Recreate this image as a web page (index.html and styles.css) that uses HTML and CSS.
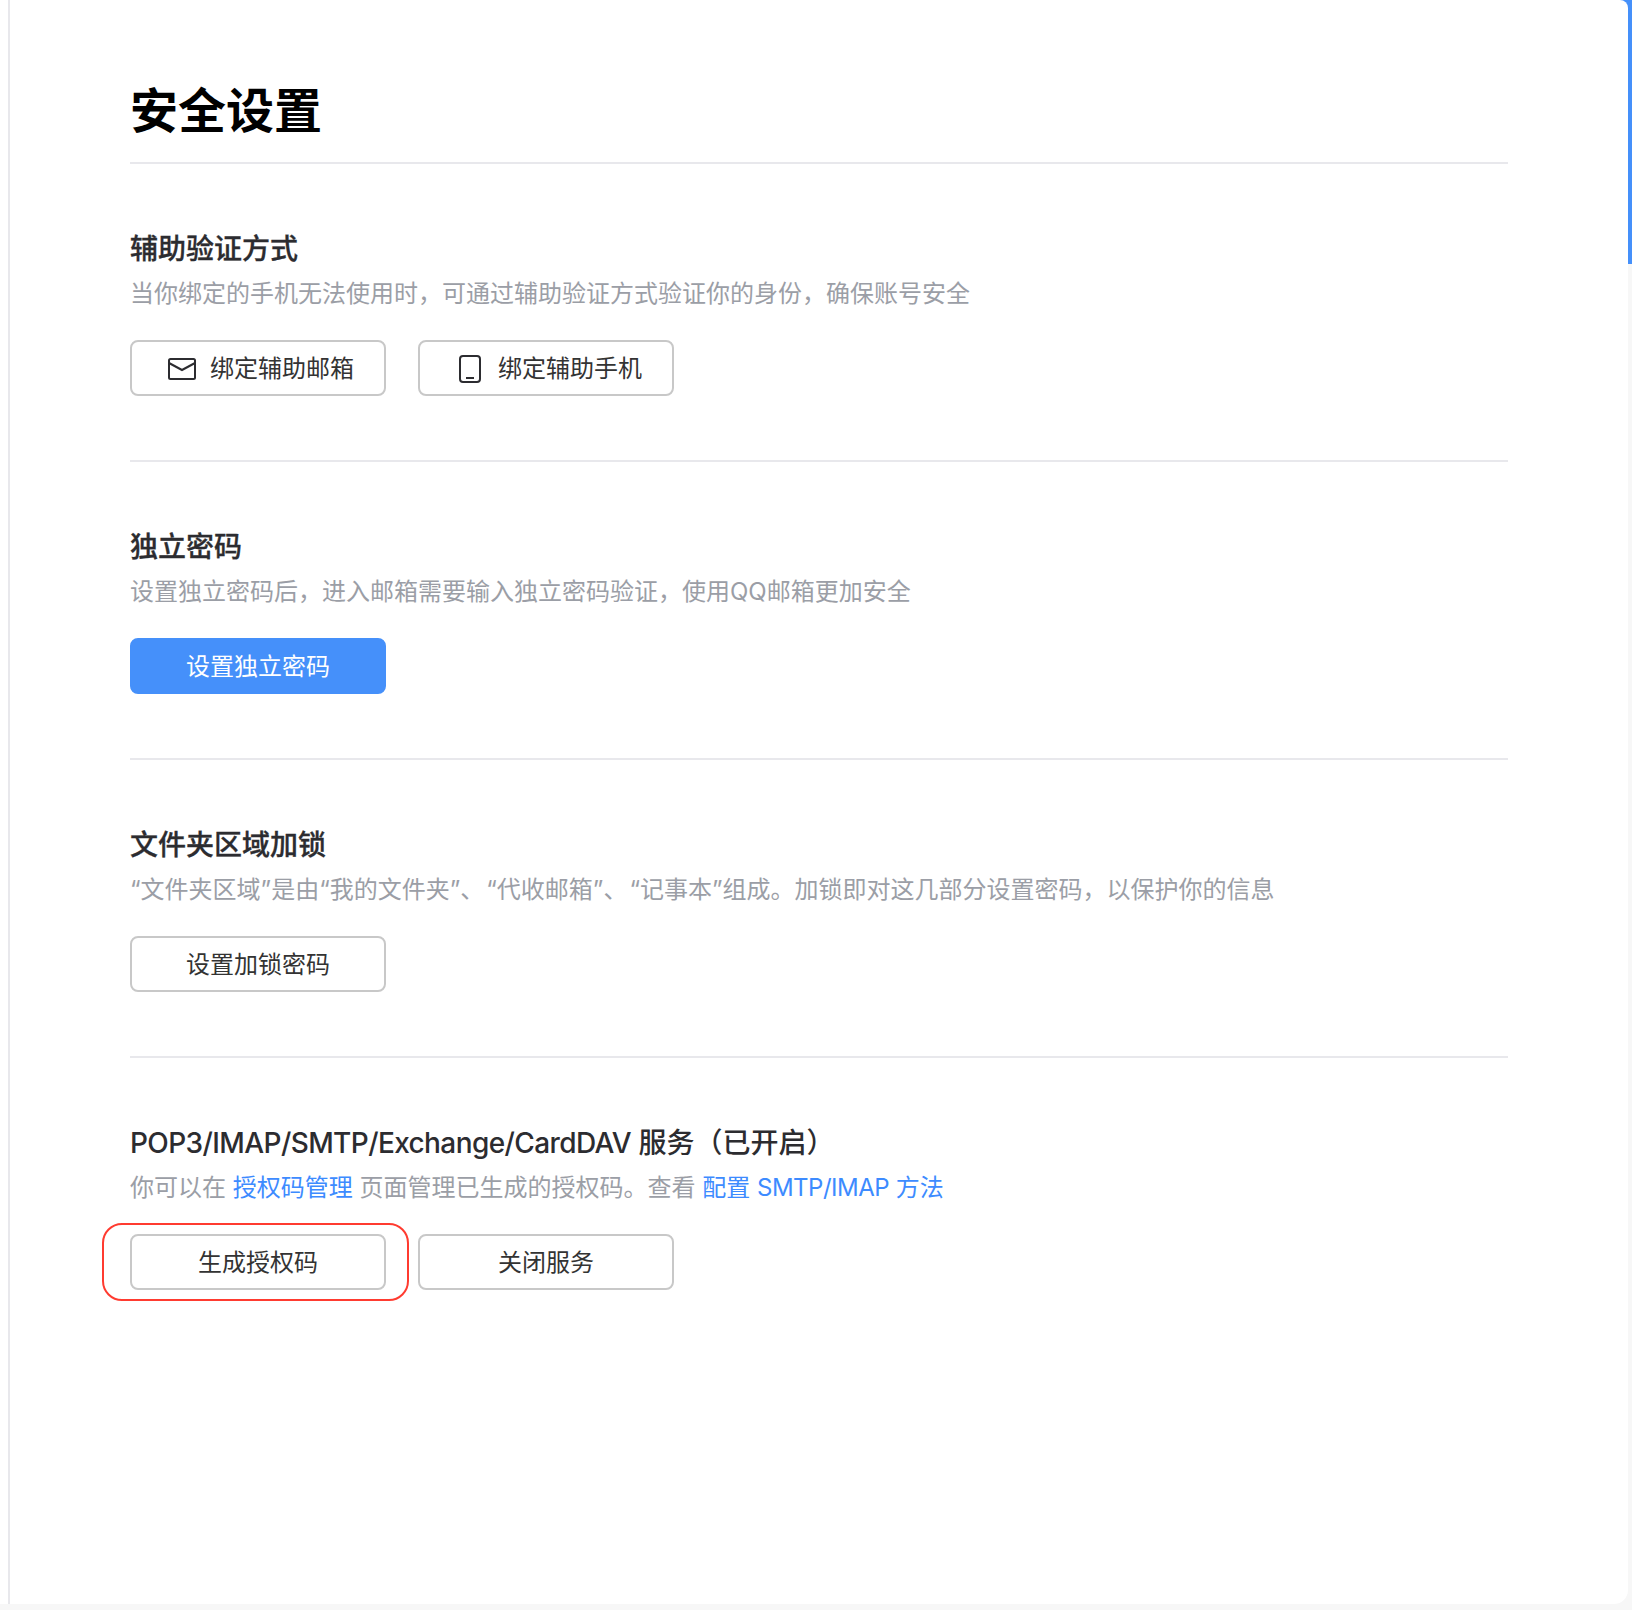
FILE: index.html
```html
<!doctype html>
<html lang="zh-CN">

<head>
    <meta charset="UTF-8" />
    <title>安全设置</title>
    <link rel="stylesheet" href="styles.css">
</head>

<body>
    <div class="scrollbar"></div>
    <div class="page">
        <div class="panel">
            <h1 class="page-title">安全设置</h1>

            <section class="section">
                <h2 class="section-title title-strong">辅助验证方式</h2>
                <p class="section-desc">当你绑定的手机无法使用时，可通过辅助验证方式验证你的身份，确保账号安全</p>
                <div class="button-group">
                    <button class="btn btn-mail">
                        <svg class="btn-icon" width="28" height="22" viewBox="0 0 28 22" fill="none" stroke="#2c2c30" stroke-width="2">
                            <rect x="1" y="1" width="26" height="20" rx="1.5" />
                            <path d="M1 5l13 7 13-7" />
                        </svg>
                        绑定辅助邮箱
                    </button>
                    <button class="btn btn-phone">
                        <svg class="btn-icon" width="22" height="28" viewBox="0 0 22 28" fill="none" stroke="#2c2c30" stroke-width="2">
                            <rect x="1" y="1" width="20" height="26" rx="3" />
                            <path d="M7 23h8" />
                        </svg>
                        绑定辅助手机
                    </button>
                </div>
            </section>

            <section class="section">
                <h2 class="section-title title-strong">独立密码</h2>
                <p class="section-desc">设置独立密码后，进入邮箱需要输入独立密码验证，使用QQ邮箱更加安全</p>
                <div class="button-group">
                    <button class="btn btn-primary">设置独立密码</button>
                </div>
            </section>

            <section class="section">
                <h2 class="section-title title-strong">文件夹区域加锁</h2>
                <p class="section-desc">“文件夹区域”是由“我的文件夹”<span class="sep">、</span>“代收邮箱”<span class="sep">、</span>“记事本”组成。加锁即对这几部分设置密码，以保护你的信息</p>
                <div class="button-group">
                    <button class="btn">设置加锁密码</button>
                </div>
            </section>

            <section class="section">
                <h2 class="section-title"><span class="latin-title">POP3/IMAP/SMTP/Exchange/CardDAV</span> 服务（已开启）</h2>
                <p class="section-desc">你可以在 <a class="link" href="#">授权码管理</a> 页面管理已生成的授权码。查看 <a class="link" href="#">配置 <span class="latin-link">SMTP/IMAP</span> 方法</a></p>
                <div class="button-group">
                    <div class="highlight-wrap">
                        <span class="highlight"></span>
                        <button class="btn">生成授权码</button>
                    </div>
                    <button class="btn">关闭服务</button>
                </div>
            </section>
        </div>
    </div>
</body>

</html>
```

FILE: styles.css
```css
html,
body {
    margin: 0;
    height: 1610px;
    overflow: hidden;
}

body {
    background: #f7f7f7;
    font-family: Inter, "Noto Sans CJK SC", sans-serif;
    color: #2c2c30;
}

.page {
    height: 1604px;
    padding-left: 8px;
    padding-right: 4px;
    background: linear-gradient(to right, #fff 8px, transparent 8px);
    box-sizing: border-box;
}

.panel {
    height: 100%;
    padding: 79px 120px 0 120px;
    background: #fff;
    border-left: 2px solid #e8e8ec;
    border-radius: 0 8px 14px 0;
    box-sizing: border-box;
}

.page-title {
    margin: 0;
    padding-bottom: 19px;
    font-size: 48px;
    line-height: 64px;
    font-weight: 700;
    color: #000;
}

.section {
    padding: 65px 0 64px 0;
    border-top: 2px solid #e8e8ec;
}

.section-title {
    margin: 0 0 5px 0;
    font-size: 28px;
    line-height: 40px;
    font-weight: 500;
    color: #2c2c30;
}

.title-strong {
    -webkit-text-stroke: 0.3px #2c2c30;
}

.latin-title {
    letter-spacing: -0.6px;
}

.section-desc {
    margin: 0 0 26px 0;
    font-size: 24px;
    line-height: 40px;
    color: #9b9ea6;
}

.sep {
    letter-spacing: 2px;
}

.link {
    color: #3d8bff;
    text-decoration: none;
}

.latin-link {
    letter-spacing: -0.5px;
}

.button-group {
    display: flex;
    gap: 32px;
}

.btn {
    display: flex;
    align-items: center;
    justify-content: center;
    width: 256px;
    height: 56px;
    padding: 0 0 4px 0;
    background: #fff;
    border: 2px solid #c8c8c8;
    border-radius: 8px;
    font-family: inherit;
    font-size: 24px;
    color: #333;
}

.btn-icon {
    margin-top: 5px;
}

.btn-mail {
    padding-left: 6px;
}

.btn-mail .btn-icon {
    margin-right: 14px;
}

.btn-phone {
    padding-left: 9px;
}

.btn-phone .btn-icon {
    margin-right: 17px;
}

.btn-primary {
    background: #4590fa;
    border-color: #4590fa;
    color: #fff;
}

.highlight-wrap {
    position: relative;
}

.highlight {
    position: absolute;
    top: -11px;
    bottom: -11px;
    left: -28px;
    right: -23px;
    border: 2px solid #ff3b30;
    border-radius: 20px;
    pointer-events: none;
}

.scrollbar {
    position: absolute;
    top: 0;
    right: 0;
    z-index: -1;
    width: 20px;
    height: 264px;
    background: #4590fa;
}
```
